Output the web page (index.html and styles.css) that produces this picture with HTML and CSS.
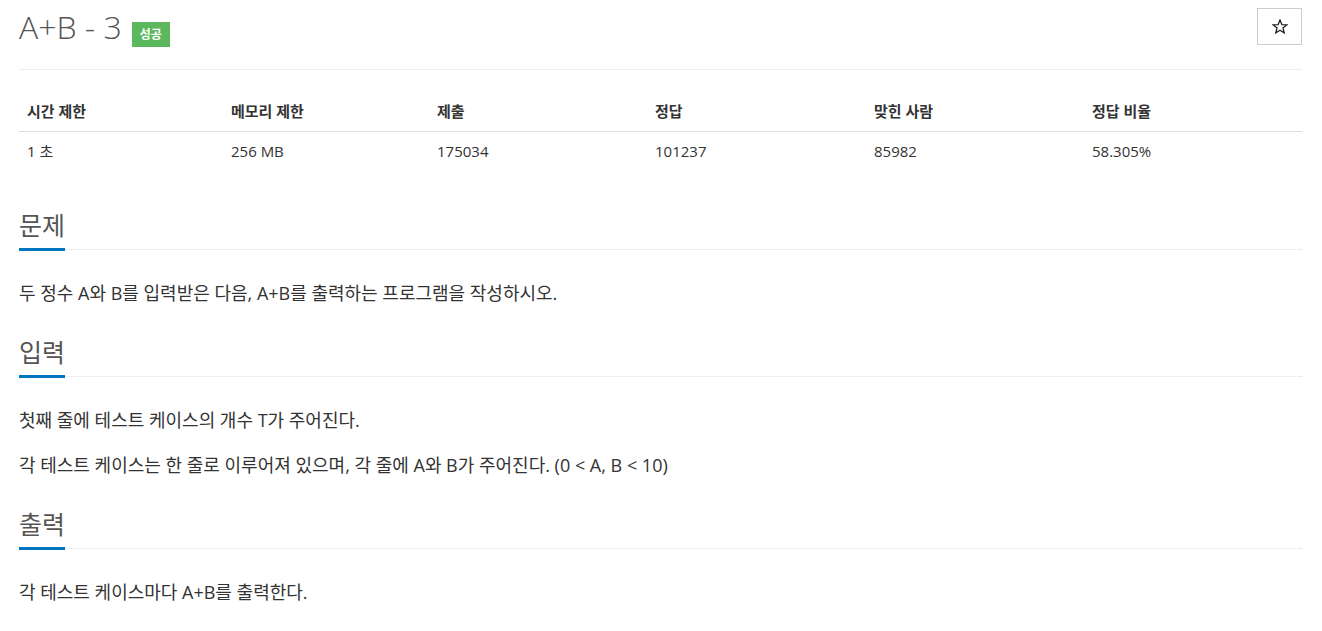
FILE: index.html
```html
<!DOCTYPE html>
<html lang="ko">
<head>
<meta charset="utf-8">
<title>A+B - 3</title>
<link rel="stylesheet" href="styles.css">
</head>
<body>
<div class="page">
  <div class="page-header">
    <h1 class="title"><span class="title-text">A+B - 3</span><span class="badge">성공</span></h1>
    <button class="star-btn" type="button" aria-label="즐겨찾기">
      <svg width="16" height="15" viewBox="0 0 16 15" aria-hidden="true">
        <polygon points="8,1 9.9,5.6 14.8,5.9 11,9 12.2,13.9 8,11.2 3.8,13.9 5,9 1.2,5.9 6.1,5.6" fill="none" stroke="#222" stroke-width="1.3" stroke-linejoin="miter"/>
      </svg>
    </button>
  </div>
  <hr class="divider">
  <table class="info">
    <thead>
      <tr>
        <th class="c1">시간 제한</th>
        <th class="c2">메모리 제한</th>
        <th class="c3">제출</th>
        <th class="c4">정답</th>
        <th class="c5">맞힌 사람</th>
        <th class="c6">정답 비율</th>
      </tr>
    </thead>
    <tbody>
      <tr>
        <td>1 초</td>
        <td>256 MB</td>
        <td>175034</td>
        <td>101237</td>
        <td>85982</td>
        <td>58.305%</td>
      </tr>
    </tbody>
  </table>

  <section class="section">
    <div class="headline"><h2>문제</h2><div class="rule"></div></div>
    <p>두 정수 A와 B를 입력받은 다음, A+B를 출력하는 프로그램을 작성하시오.</p>
  </section>

  <section class="section">
    <div class="headline"><h2>입력</h2><div class="rule"></div></div>
    <p>첫째 줄에 테스트 케이스의 개수 T가 주어진다.</p>
    <p>각 테스트 케이스는 한 줄로 이루어져 있으며, 각 줄에 A와 B가 주어진다. (0 &lt; A, B &lt; 10)</p>
  </section>

  <section class="section">
    <div class="headline"><h2>출력</h2><div class="rule"></div></div>
    <p>각 테스트 케이스마다 A+B를 출력한다.</p>
  </section>
</div>
</body>
</html>
```

FILE: styles.css
```css
* { box-sizing: border-box; }
html, body {
  margin: 0;
  padding: 0;
  background: #fff;
}
body {
  font-family: "Open Sans", "Noto Sans CJK KR", sans-serif;
  color: #333;
  font-size: 15px;
}
.page {
  margin: 0 20px 0 19px;
  padding-top: 8px;
}
.page-header {
  display: flex;
  justify-content: space-between;
  align-items: flex-start;
  height: 37px;
}
.title {
  margin: 0;
  display: flex;
  align-items: flex-start;
  height: 37px;
  font-size: 32px;
  line-height: 38px;
  font-weight: 300;
  color: #555;
}
.badge {
  display: inline-block;
  margin-left: 10px;
  margin-top: 14px;
  background: #5cb85c;
  color: #fff;
  font-size: 12px;
  font-weight: 700;
  line-height: 17px;
  padding: 4px 8px 4px;
}
.star-btn {
  width: 45px;
  height: 37px;
  border: 1px solid #ccc;
  background: #fff;
  padding: 0;
  display: flex;
  align-items: center;
  justify-content: center;
}
.star-btn svg { display: block; margin-top: -1px; }
.divider {
  border: 0;
  border-top: 1px solid #eee;
  margin: 24px 0 23px;
}
.info {
  width: 100%;
  border-collapse: collapse;
  table-layout: fixed;
  margin-bottom: 40px;
}
.info th, .info td {
  text-align: left;
  padding: 8px;
  line-height: 21px;
  font-size: 15px;
}
.info th {
  font-weight: 700;
  border-bottom: 1px solid #ddd;
  color: #333;
  padding-bottom: 9px;
}
.info td { padding-top: 9px; }
.c1 { width: 204px; }
.c2 { width: 206px; }
.c3 { width: 218px; }
.c4 { width: 219px; }
.c5 { width: 218px; }
.c6 { width: 218px; }

.section { margin-top: 29px; }
.section:first-of-type { margin-top: 0; }
.headline {
  display: flex;
  align-items: flex-end;
  margin-bottom: 27px;
}
.headline h2 {
  margin: 0;
  font-size: 25px;
  line-height: 30px;
  font-weight: 400;
  color: #555;
  padding-bottom: 8px;
  border-bottom: 3px solid #0076c0;
}
.headline .rule {
  flex: 1;
  border-bottom: 1px dotted #ddd;
  margin-bottom: 1px;
}
.section p {
  margin: 0 0 15px;
  font-size: 18px;
  line-height: 30px;
  color: #333;
}
```
